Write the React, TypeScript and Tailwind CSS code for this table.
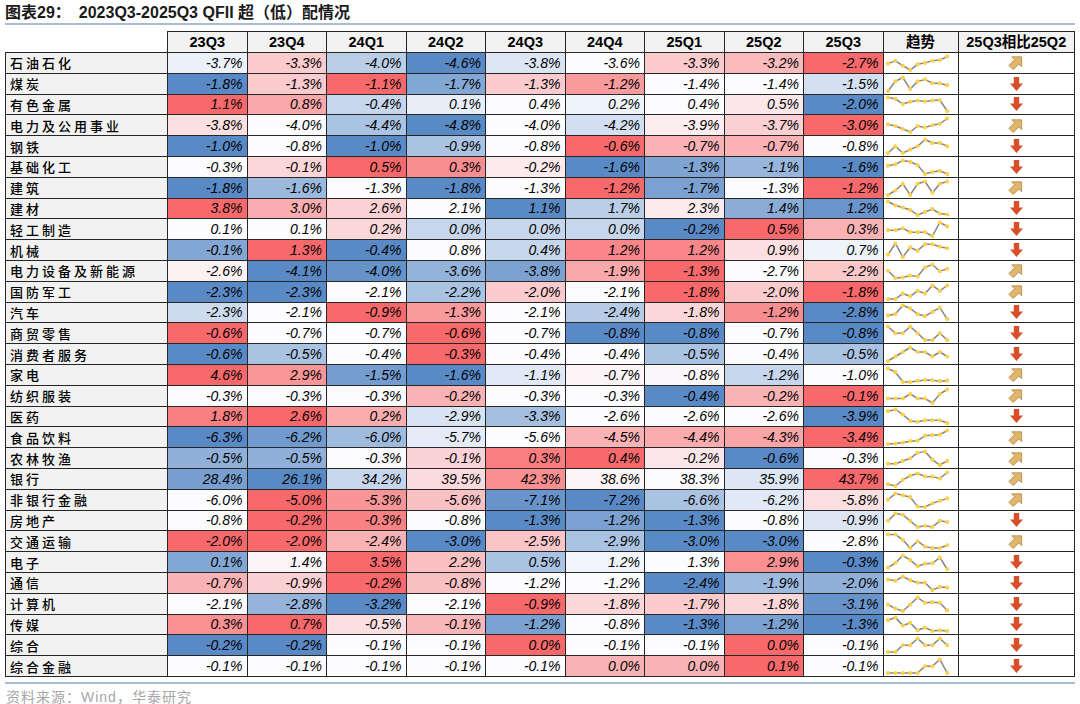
const quarters = ["23Q3", "23Q4", "24Q1", "24Q2", "24Q3", "24Q4", "25Q1", "25Q2", "25Q3"];

const rows: [string, number[]][] = [
  ["石油石化", [-3.7, -3.3, -4.0, -4.6, -3.8, -3.6, -3.3, -3.2, -2.7]],
  ["煤炭", [-1.8, -1.3, -1.1, -1.7, -1.3, -1.2, -1.4, -1.4, -1.5]],
  ["有色金属", [1.1, 0.8, -0.4, 0.1, 0.4, 0.2, 0.4, 0.5, -2.0]],
  ["电力及公用事业", [-3.8, -4.0, -4.4, -4.8, -4.0, -4.2, -3.9, -3.7, -3.0]],
  ["钢铁", [-1.0, -0.8, -1.0, -0.9, -0.8, -0.6, -0.7, -0.7, -0.8]],
  ["基础化工", [-0.3, -0.1, 0.5, 0.3, -0.2, -1.6, -1.3, -1.1, -1.6]],
  ["建筑", [-1.8, -1.6, -1.3, -1.8, -1.3, -1.2, -1.7, -1.3, -1.2]],
  ["建材", [3.8, 3.0, 2.6, 2.1, 1.1, 1.7, 2.3, 1.4, 1.2]],
  ["轻工制造", [0.1, 0.1, 0.2, 0.0, 0.0, 0.0, -0.2, 0.5, 0.3]],
  ["机械", [-0.1, 1.3, -0.4, 0.8, 0.4, 1.2, 1.2, 0.9, 0.7]],
  ["电力设备及新能源", [-2.6, -4.1, -4.0, -3.6, -3.8, -1.9, -1.3, -2.7, -2.2]],
  ["国防军工", [-2.3, -2.3, -2.1, -2.2, -2.0, -2.1, -1.8, -2.0, -1.8]],
  ["汽车", [-2.3, -2.1, -0.9, -1.3, -2.1, -2.4, -1.8, -1.2, -2.8]],
  ["商贸零售", [-0.6, -0.7, -0.7, -0.6, -0.7, -0.8, -0.8, -0.7, -0.8]],
  ["消费者服务", [-0.6, -0.5, -0.4, -0.3, -0.4, -0.4, -0.5, -0.4, -0.5]],
  ["家电", [4.6, 2.9, -1.5, -1.6, -1.1, -0.7, -0.8, -1.2, -1.0]],
  ["纺织服装", [-0.3, -0.3, -0.3, -0.2, -0.3, -0.3, -0.4, -0.2, -0.1]],
  ["医药", [1.8, 2.6, 0.2, -2.9, -3.3, -2.6, -2.6, -2.6, -3.9]],
  ["食品饮料", [-6.3, -6.2, -6.0, -5.7, -5.6, -4.5, -4.4, -4.3, -3.4]],
  ["农林牧渔", [-0.5, -0.5, -0.3, -0.1, 0.3, 0.4, -0.2, -0.6, -0.3]],
  ["银行", [28.4, 26.1, 34.2, 39.5, 42.3, 38.6, 38.3, 35.9, 43.7]],
  ["非银行金融", [-6.0, -5.0, -5.3, -5.6, -7.1, -7.2, -6.6, -6.2, -5.8]],
  ["房地产", [-0.8, -0.2, -0.3, -0.8, -1.3, -1.2, -1.3, -0.8, -0.9]],
  ["交通运输", [-2.0, -2.0, -2.4, -3.0, -2.5, -2.9, -3.0, -3.0, -2.8]],
  ["电子", [0.1, 1.4, 3.5, 2.2, 0.5, 1.2, 1.3, 2.9, -0.3]],
  ["通信", [-0.7, -0.9, -0.2, -0.8, -1.2, -1.2, -2.4, -1.9, -2.0]],
  ["计算机", [-2.1, -2.8, -3.2, -2.1, -0.9, -1.8, -1.7, -1.8, -3.1]],
  ["传媒", [0.3, 0.7, -0.5, -0.1, -1.2, -0.8, -1.3, -1.2, -1.3]],
  ["综合", [-0.2, -0.2, -0.1, -0.1, 0.0, -0.1, -0.1, 0.0, -0.1]],
  ["综合金融", [-0.1, -0.1, -0.1, -0.1, -0.1, 0.0, 0.0, 0.1, -0.1]],
];

// excel-style 3 colour scale: min blue, median white, max red
const BLUE = [90, 138, 198];
const WHITE = [252, 252, 255];
const RED = [248, 105, 107];

function mix(a: number[], b: number[], t: number) {
  const c = a.map((v, i) => Math.round(v + (b[i] - v) * t));
  return `rgb(${c[0]},${c[1]},${c[2]})`;
}

function scale(vals: number[]) {
  const s = [...vals].sort((a, b) => a - b);
  const min = s[0];
  const max = s[s.length - 1];
  const mid = s[Math.floor(s.length / 2)];
  return (v: number) => {
    if (v <= mid) {
      const t = mid === min ? 1 : (v - min) / (mid - min);
      return mix(BLUE, WHITE, t);
    }
    const t = max === mid ? 0 : (v - mid) / (max - mid);
    return mix(WHITE, RED, t);
  };
}

function Spark({ vals }: { vals: number[] }) {
  const min = Math.min(...vals);
  const max = Math.max(...vals);
  const pts = vals.map((v, i) => {
    const x = 4 + i * 7.4;
    const y = max === min ? 9 : 2.5 + ((max - v) / (max - min)) * 13.5;
    return [x, y];
  });
  return (
    <svg width="75" height="18" className="block">
      <polyline
        points={pts.map((p) => p.join(",")).join(" ")}
        fill="none"
        stroke="#858585"
        strokeWidth="1.5"
      />
      {pts.map(([x, y], i) => (
        <circle key={i} cx={x} cy={y} r="2.1" fill="#ffd14a" />
      ))}
    </svg>
  );
}

function DownArrow() {
  return (
    <svg width="13" height="14" viewBox="0 0 13 14" className="mx-auto block">
      <polygon points="3.8,0 9.2,0 9.2,6.5 13,6.5 6.5,14 0,6.5 3.8,6.5" fill="#d94f2a" />
    </svg>
  );
}

function UpRightArrow() {
  return (
    <svg width="16" height="15" viewBox="-1 -1 16 16" className="mx-auto block">
      <g transform="rotate(45 7 7)">
        <polygon
          points="7,-1.5 14.5,6 10.2,6 10.2,14.5 3.8,14.5 3.8,6 -0.5,6"
          fill="#e0b56c"
          stroke="#b98c45"
          strokeWidth="0.9"
          strokeLinejoin="round"
        />
      </g>
    </svg>
  );
}

export default function App() {
  return (
    <div className="w-[1080px] h-[704px] bg-white px-[5px] font-['Liberation_Sans','Noto_Sans_CJK_SC',sans-serif] text-black overflow-hidden">
      {/* Title */}
      <div className="h-[23px] flex items-center text-[16px] font-bold text-[#1a1a1a] pt-[2px]">
        <span>图表29：</span>
        <span className="ml-[8px]">2023Q3-2025Q3 QFII 超（低）配情况</span>
      </div>
      <div className="h-[2px] bg-[#a9bcd6]" />

      {/* Table */}
      <table className="mt-[6px] border-collapse table-fixed w-[1070px]">
        <colgroup>
          <col className="w-[162px]" />
          {quarters.map((q) => (
            <col key={q} className="w-[79.5px]" />
          ))}
          <col className="w-[75px]" />
          <col />
        </colgroup>
        <thead>
          <tr className="h-[21px]">
            <th className="p-0" />
            {quarters.map((q) => (
              <th key={q} className="p-0 border border-[#262626] bg-[#f2f2f2] text-[14.5px] leading-none font-bold text-center">
                {q}
              </th>
            ))}
            <th className="p-0 border border-[#262626] bg-[#f2f2f2] text-[14.5px] leading-none font-bold text-center">趋势</th>
            <th className="p-0 border border-[#262626] bg-[#f2f2f2] text-[14.5px] leading-none font-bold text-center">25Q3相比25Q2</th>
          </tr>
        </thead>
        <tbody>
          {rows.map(([name, vals]) => {
            const color = scale(vals);
            const up = vals[8] > vals[7];
            return (
              <tr key={name} className="h-[20.8px]">
                <td className="p-0 pl-[4px] border border-[#262626] bg-[#f2f2f2] text-[13px] tracking-[3px] font-['Noto_Sans_CJK_SC',sans-serif] font-medium leading-none whitespace-nowrap">
                  {name}
                </td>
                {vals.map((v, i) => (
                  <td
                    key={i}
                    className="p-0 pr-[4px] border border-[#262626] text-right italic text-[14px] leading-none"
                    style={{ backgroundColor: color(v) }}
                  >
                    {v.toFixed(1)}%
                  </td>
                ))}
                <td className="p-0 border border-[#262626]">
                  <Spark vals={vals} />
                </td>
                <td className="p-0 border border-[#262626]">
                  {up ? <UpRightArrow /> : <DownArrow />}
                </td>
              </tr>
            );
          })}
        </tbody>
      </table>

      {/* Source */}
      <div className="mt-[5px] h-[2px] bg-[#a9bcd6]" />
      <div className="mt-[6px] text-[14px] tracking-[1px] text-[#a6a6a6] leading-none pl-[1px]">资料来源：Wind，华泰研究</div>
    </div>
  );
}
